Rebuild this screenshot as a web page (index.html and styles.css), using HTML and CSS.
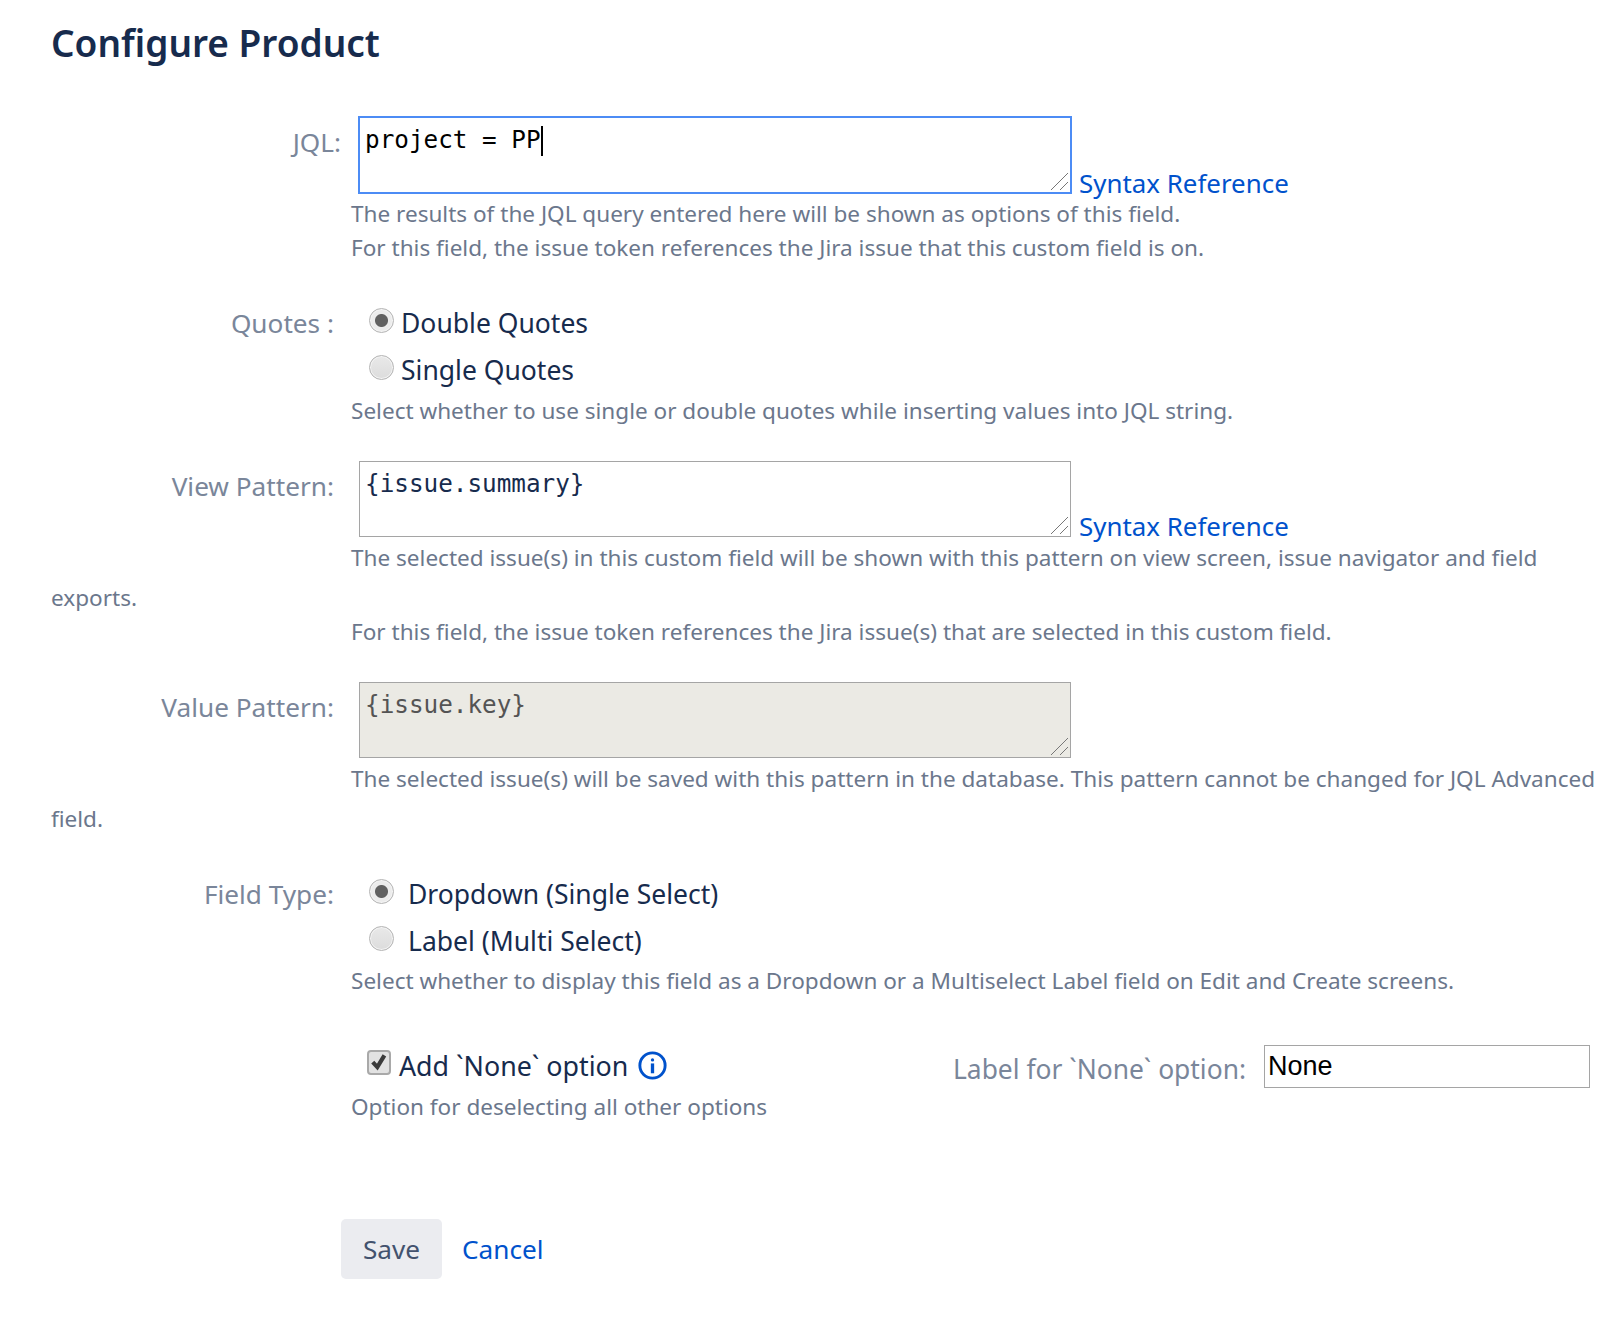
FILE: index.html
```html
<!DOCTYPE html>
<html lang="en">
<head>
    <meta charset="UTF-8">
    <title>Configure Product</title>
    <link rel="stylesheet" href="styles.css">
</head>
<body>
    <form class="config">
        <h1 class="title">Configure Product</h1>

        <div class="field field-first">
            <label class="field-label label-jql">JQL:</label>
            <div class="pattern pattern-focus">project = PP<span class="caret"></span>
                <svg class="grip" viewBox="0 0 20 20"><path d="M2 19L19 2M11 19L19 11"/></svg>
            </div>
            <a class="syntax" href="#">Syntax Reference</a>
        </div>
        <div class="desc">The results of the JQL query entered here will be shown as options of this field.</div>
        <div class="desc desc-next">For this field, the issue token references the Jira issue that this custom field is on.</div>

        <div class="field field-options">
            <label class="field-label">Quotes :</label>
            <div class="options">
                <label class="option"><input type="radio" name="quotes" checked>Double Quotes</label>
                <label class="option"><input type="radio" name="quotes">Single Quotes</label>
            </div>
        </div>
        <div class="desc desc-options">Select whether to use single or double quotes while inserting values into JQL string.</div>

        <div class="field field-pattern">
            <label class="field-label">View Pattern:</label>
            <div class="pattern">{issue.summary}
                <svg class="grip" viewBox="0 0 20 20"><path d="M2 19L19 2M11 19L19 11"/></svg>
            </div>
            <a class="syntax" href="#">Syntax Reference</a>
        </div>
        <div class="desc desc-wrap">The selected issue(s) in this custom field will be shown with this pattern on view screen, issue navigator and field exports.</div>
        <div class="desc desc-next">For this field, the issue token references the Jira issue(s) that are selected in this custom field.</div>

        <div class="field field-pattern">
            <label class="field-label">Value Pattern:</label>
            <div class="pattern pattern-off">{issue.key}
                <svg class="grip" viewBox="0 0 20 20"><path d="M2 19L19 2M11 19L19 11"/></svg>
            </div>
        </div>
        <div class="desc desc-wrap">The selected issue(s) will be saved with this pattern in the database. This pattern cannot be changed for JQL Advanced field.</div>

        <div class="field field-options">
            <label class="field-label">Field Type:</label>
            <div class="options options-wide">
                <label class="option"><input type="radio" name="ftype" checked>Dropdown (Single Select)</label>
                <label class="option"><input type="radio" name="ftype">Label (Multi Select)</label>
            </div>
        </div>
        <div class="desc desc-type">Select whether to display this field as a Dropdown or a Multiselect Label field on Edit and Create screens.</div>

        <div class="field field-none">
            <label class="option option-check">
                <span class="checkbox"><svg viewBox="0 0 24 24"><path d="M4.5 11.5L10 17.5L18.5 3.5"/></svg></span>Add `None` option
                <svg class="info" viewBox="0 0 28 28"><circle cx="14" cy="14" r="12.2"/><rect x="12.4" y="7" width="3.2" height="3.2" rx="1.6"/><rect x="12.4" y="12" width="3.2" height="9.5"/></svg>
            </label>
            <div class="none-label">
                <label class="field-label none-text">Label for `None` option:</label>
                <input class="none-input" type="text" value="None">
            </div>
        </div>
        <div class="desc desc-none">Option for deselecting all other options</div>

        <div class="buttons">
            <button class="save" type="button">Save</button>
            <a class="cancel" href="#">Cancel</a>
        </div>
    </form>
</body>
</html>
```
FILE: styles.css
```css
body {
    font-family: "Noto Sans", "Open Sans", sans-serif;
    background-color: #fff;
    color: #172b4d;
    margin: 0;
    padding-left: 51px;
    font-size: 26.2px;
}
.title {
    font-size: 37px;
    font-weight: 600;
    line-height: 50px;
    margin: 18px 0 0;
}
.field {
    display: flex;
    align-items: flex-start;
}
.field-first {
    margin-top: 48px;
}
.field-pattern {
    margin-top: 33px;
}
.field-pattern .field-label {
    padding-top: 2px;
}
.field-options {
    margin-top: 35px;
}
.field-none {
    margin-top: 44px;
}
.field-label {
    width: 283px;
    flex: none;
    text-align: right;
    color: #7a869a;
    line-height: 46px;
    margin-right: 25px;
}
.label-jql {
    width: 290px;
    margin-right: 17px;
    padding-top: 3px;
}
.pattern {
    position: relative;
    box-sizing: border-box;
    width: 712px;
    height: 76px;
    flex: none;
    border: 1px solid #a5a5a5;
    padding: 2px 5px;
    font-family: "DejaVu Sans Mono", "Liberation Mono", monospace;
    font-size: 24.3px;
    line-height: 40px;
    color: #172b4d;
    background: #fff;
}
.pattern-focus {
    width: 714px;
    height: 78px;
    border: 2px solid #4c8cf5;
    padding: 2px 5px;
    color: #000;
}
.pattern-off {
    background: #ebeae4;
    color: #545454;
}
.caret {
    display: inline-block;
    width: 2px;
    height: 30px;
    background: #000;
    vertical-align: middle;
}
.grip {
    position: absolute;
    right: 1px;
    bottom: 1px;
    width: 20px;
    height: 20px;
}
.grip path {
    fill: none;
    stroke: #777;
    stroke-width: 1;
}
.syntax {
    color: #0052cc;
    text-decoration: none;
    font-size: 25.9px;
    line-height: 34px;
    margin: 0 0 -6px 7px;
    align-self: flex-end;
}
.field-pattern .syntax {
    margin: 0 0 -6px 8px;
}
.desc {
    font-size: 22.55px;
    line-height: 34px;
    color: #6b778c;
    text-indent: 300px;
    margin-top: 3px;
}
.desc-next {
    margin-top: 0;
}
.desc-options {
    margin-top: 0;
}
.desc-type {
    margin-top: -1px;
}
.desc-wrap {
    line-height: 40px;
    margin-top: 1px;
    margin-bottom: -3px;
}
.desc-none {
    margin-top: 1px;
}
.options {
    display: flex;
    flex-direction: column;
    margin-left: 10px;
    font-size: 26.5px;
}
.option {
    display: flex;
    align-items: center;
    line-height: 47px;
    height: 47px;
}
.option input {
    appearance: none;
    box-sizing: border-box;
    width: 25px;
    height: 25px;
    margin: -7px 7px 0 0;
    border: 1px solid #b4b4b4;
    border-radius: 50%;
    background: linear-gradient(#e9e9e9, #dcdcdc);
    box-shadow: inset 0 0 0 1px #f4f4f4;
}
.option input:checked {
    background: radial-gradient(circle, #616161 0 6px, #ececec 7px);
}
.options-wide .option input {
    margin-right: 14px;
}
.option-check {
    margin-left: 316px;
    width: 590px;
    flex: none;
    font-size: 26.8px;
}
.checkbox {
    box-sizing: border-box;
    width: 24px;
    height: 25px;
    margin: -6px 8px 0 0;
    border: 2px solid #a9a9a9;
    border-radius: 4px;
    background: #e2e2e2;
    display: flex;
}
.checkbox svg {
    width: 100%;
    height: 100%;
}
.checkbox path {
    fill: none;
    stroke: #3b3b3b;
    stroke-width: 5;
}
.info {
    width: 29px;
    height: 29px;
    margin-left: 10px;
}
.info circle {
    fill: none;
    stroke: #0052cc;
    stroke-width: 2.8;
}
.info rect {
    fill: #0052cc;
}
.none-label {
    display: flex;
    align-items: flex-start;
    height: 46px;
    margin-left: -4px;
}
.none-text {
    width: auto;
    margin-right: 18px;
    padding-top: 4px;
    font-size: 26.4px;
}
.none-input {
    box-sizing: border-box;
    width: 326px;
    height: 43px;
    margin-top: 3px;
    border: 1px solid #a5a5a5;
    padding: 0 3px;
    font-family: "Liberation Sans", Arial, sans-serif;
    font-size: 27px;
    color: #000;
    outline: none;
}
.buttons {
    display: flex;
    align-items: center;
    margin: 95px 0 43px 290px;
}
.save {
    width: 101px;
    height: 60px;
    border: none;
    border-radius: 5px;
    background: #ebecf0;
    color: #42526e;
    font-family: inherit;
    font-size: 26.2px;
}
.cancel {
    color: #0052cc;
    text-decoration: none;
    margin-left: 20px;
}
```
